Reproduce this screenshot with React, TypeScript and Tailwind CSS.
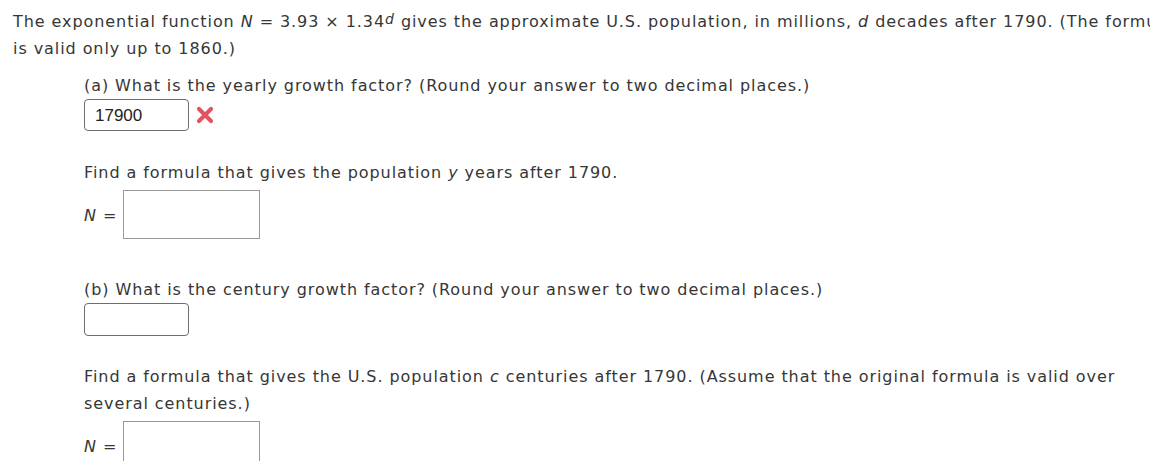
import React from 'react';

const font = { fontFamily: 'Verdana, "DejaVu Sans", sans-serif' };

function Mark() {
  return (
    <svg width="20" height="20" viewBox="0 0 20 20" className="ml-[6px] self-center">
      <path d="M4 4 L16 16 M16 4 L4 16" stroke="#e05560" strokeWidth="4.2" strokeLinecap="round" />
    </svg>
  );
}

function FormulaRow() {
  return (
    <div className="flex items-end gap-[6px]">
      <span className="pb-[10px]">
        <i>N</i> =
      </span>
      <div className="w-[137px] h-[49px] border border-[#9a9a9a] bg-white" />
    </div>
  );
}

export default function App() {
  return (
    <div className="w-[1150px] h-[461px] overflow-hidden bg-white">
      <div
        className="w-[1300px] pl-[13px] pt-[8px] text-[16px] leading-[27px] tracking-[0.93px] text-[#363636] whitespace-nowrap"
        style={font}
      >
        <p>
          The exponential function <i>N</i> = 3.93 × 1.34
          <sup className="text-[14px] relative -top-[3px]">
            <i>d</i>
          </sup>{' '}
          gives the approximate U.S. population, in millions, <i>d</i> decades after 1790. (The formula
          <br />
          is valid only up to 1860.)
        </p>

        <div className="ml-[71px]">
          <p className="mt-[10px]">
            (a) What is the yearly growth factor? (Round your answer to two decimal places.)
          </p>
          <div className="flex items-center">
            <div
              className="w-[105px] h-[32px] border border-[#6e6e6e] rounded-[4px] px-[10px] flex items-center text-[17px] tracking-normal text-[#222]"
              style={{ fontFamily: '"Liberation Sans", Arial, sans-serif' }}
            >
              17900
            </div>
            <Mark />
          </div>

          <p className="mt-[28px]">
            Find a formula that gives the population <i>y</i> years after 1790.
          </p>
          <div className="mt-[4px]">
            <FormulaRow />
          </div>

          <p className="mt-[37px]">
            (b) What is the century growth factor? (Round your answer to two decimal places.)
          </p>
          <div className="w-[105px] h-[33px] border border-[#6e6e6e] rounded-[4px]" />

          <p className="mt-[27px]">
            Find a formula that gives the U.S. population <i>c</i> centuries after 1790. (Assume that the
            original formula is valid over
            <br />
            several centuries.)
          </p>
          <div className="mt-[4px]">
            <FormulaRow />
          </div>
        </div>
      </div>
    </div>
  );
}
